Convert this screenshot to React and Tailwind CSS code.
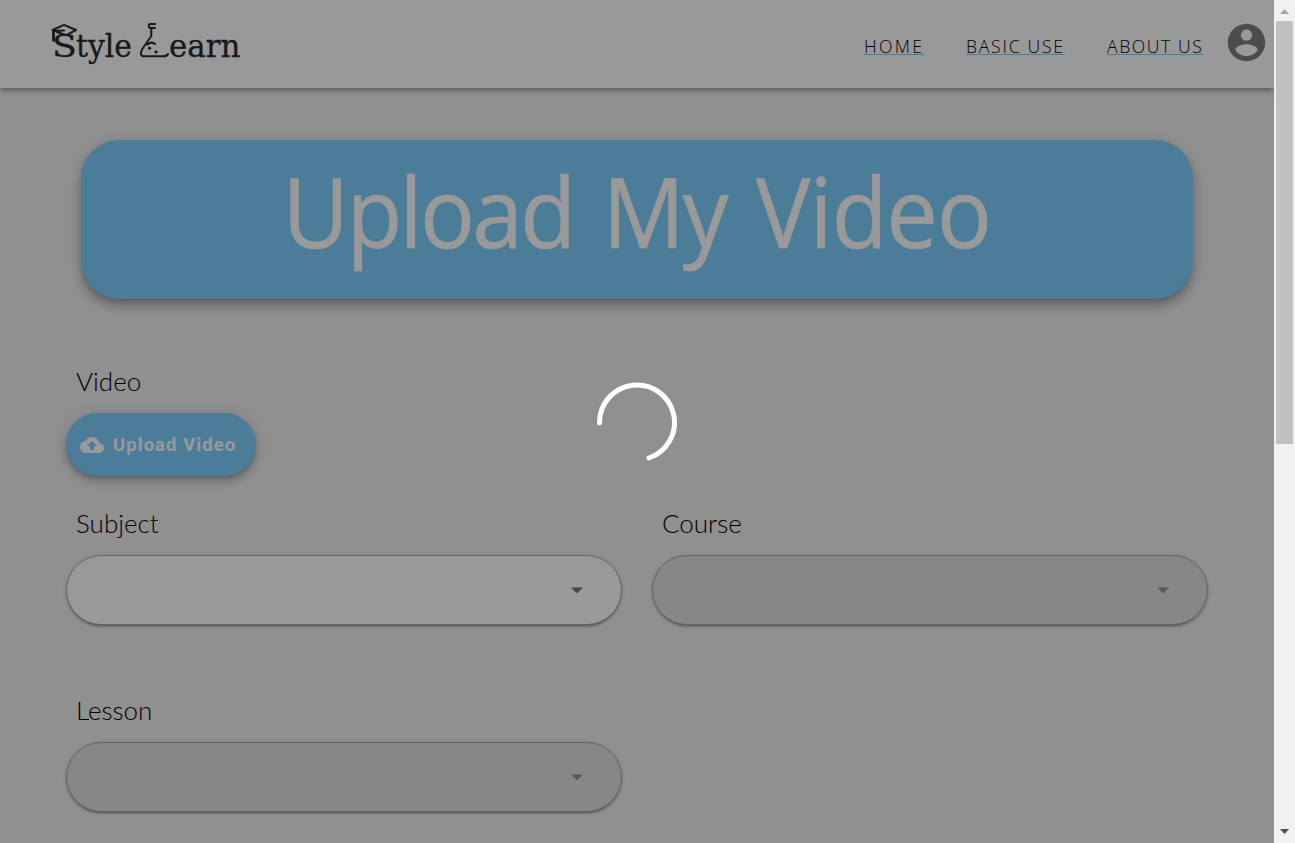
import React from "react";

function Logo() {
  return (
    <svg width="200" height="56" viewBox="46 16 200 56" className="block" fill="none" stroke="#2a2a2a" strokeWidth="2" strokeLinecap="round" strokeLinejoin="round" role="img">
      <g fill="#2a2a2a" stroke="#2a2a2a" strokeWidth="0.3" fontFamily="DejaVu Serif, serif" fontSize="31">
        <text x="52" y="57" fontSize="31" textLength="25" lengthAdjust="spacingAndGlyphs">S</text>
        <text x="76" y="57" textLength="56" lengthAdjust="spacingAndGlyphs">tyle</text>
        <text x="169" y="57" textLength="71.500" lengthAdjust="spacingAndGlyphs">earn</text>
      </g>
      <path d="M52.500 30 L64 24.800 L76 30 L66 35.300 L57 32 M64 30.500 L53.500 31" />
      <path d="M53.500 31 V40.500" strokeWidth="2.800" />
      <path d="M155 24 H150.500 Q148.800 24 148.800 26 Q148.800 27.800 150.500 28 H155 M151.300 29 V36 L142.300 49 Q138.500 56.300 144.500 56.300 H163 Q167 56.300 168 54 M147.500 44.500 Q151.500 41 155 44" />
      <circle cx="149.500" cy="48.200" r="1.200" fill="#2a2a2a" strokeWidth="0.800" />
      <circle cx="156" cy="52" r="1.200" fill="#2a2a2a" strokeWidth="0.800" />
    </svg>
  );
}

const NAV = [
  { label: "HOME", cls: "w-[60px] tracking-[2.3px]" },
  { label: "BASIC USE", cls: "w-[99px] tracking-[1.75px]" },
  { label: "ABOUT US", cls: "w-[98px] tracking-[1.6px]" },
];

function Header() {
  return (
    <header className="relative flex h-[88px] shrink-0 items-start bg-white pl-[46px] pr-[5px] shadow-[0_2px_4px_-1px_rgba(0,0,0,0.2),0_4px_5px_0_rgba(0,0,0,0.14),0_1px_10px_0_rgba(0,0,0,0.12)]">
      <div className="pt-4"><Logo /></div>
      <nav className="ml-auto flex gap-[42px] pt-[34px] font-['Open_Sans',sans-serif] text-[17.6px] font-[350] leading-6 text-black">
        {NAV.map((n) => (
          <a key={n.label} href="#" className={`${n.cls} whitespace-nowrap underline decoration-[#7dd0ff] decoration-1 underline-offset-1`}>{n.label}</a>
        ))}
      </nav>
      <svg width="45" height="45" viewBox="0 0 24 24" className="ml-[19px] mt-5 block" fill="#7f7f7f">
        <path d="M12 2C6.480 2 2 6.480 2 12s4.480 10 10 10 10-4.480 10-10S17.520 2 12 2zm0 3c1.660 0 3 1.340 3 3s-1.340 3-3 3-3-1.340-3-3 1.340-3 3-3zm0 14.200c-2.500 0-4.710-1.280-6-3.220.030-1.990 4-3.080 6-3.080 1.990 0 5.970 1.090 6 3.080-1.290 1.940-3.500 3.220-6 3.220z" />
      </svg>
    </header>
  );
}

function Label({ children }) {
  return <div className="pl-2.5 font-['Lato',sans-serif] text-[26px] font-light leading-8 text-black">{children}</div>;
}

function SelectField({ label, disabled }) {
  return (
    <div className="flex w-[556px] flex-col gap-4">
      <Label>{label}</Label>
      <div className={`flex h-[70px] items-center justify-end rounded-[35px] border border-[#a8a8a8] pr-8 shadow-[0_3px_1px_-2px_rgba(0,0,0,0.2),0_2px_2px_0_rgba(0,0,0,0.14),0_1px_5px_0_rgba(0,0,0,0.12)] ${disabled ? "bg-[#e2e2e2]" : "bg-white"}`}>
        <svg width="24" height="24" viewBox="0 0 24 24" className="block" fill={disabled ? "#959595" : "#757575"}>
          <path d="M6 9.500h12l-6 6z" />
        </svg>
      </div>
    </div>
  );
}

function Scrollbar() {
  return (
    <div className="flex h-full w-[21px] shrink-0 flex-col items-center justify-between bg-[#f1f1f1]">
      <div className="flex flex-col items-center">
        <svg width="17" height="21" viewBox="0 0 17 21" className="block" fill="#a3a3a3"><path d="M4 14 L8.500 9 L13 14z" /></svg>
        <div className="h-[423px] w-[17px] bg-[#c1c1c1]" />
      </div>
      <svg width="17" height="21" viewBox="0 0 17 21" className="block" fill="#505050"><path d="M4 7 L8.500 12 L13 7z" /></svg>
    </div>
  );
}

export default function App() {
  return (
    <div className="flex h-[843px] w-[1295px] overflow-hidden">
      <div className="relative flex w-[1274px] flex-col overflow-hidden bg-[#f0f0f0]">
        <Header />
        <main className="flex flex-col px-[66px] pt-[52px]">
          <h1 className="mx-[15px] flex h-[159px] justify-center rounded-[38px] bg-[#7dd0ff] pt-[10px] font-['Open_Sans',sans-serif] text-[97px] font-[450] leading-[120px] tracking-[-2px] [word-spacing:8px] text-white shadow-[0_5px_5px_-3px_rgba(0,0,0,0.2),0_8px_10px_1px_rgba(0,0,0,0.14),0_3px_14px_2px_rgba(0,0,0,0.12)]">
            <span className="inline-block scale-x-[0.94] whitespace-nowrap [-webkit-text-stroke:0.7px_white]">
              <span className="tracking-[-2.8px]">Upload</span> My <span className="tracking-[-0.9px]">Video</span>
            </span>
          </h1>
          <div className="mt-[66px] flex flex-col items-start gap-4">
            <Label>Video</Label>
            <button className="flex h-[63px] w-[190px] items-center rounded-[32px] bg-[#7dd0ff] pl-[14px] text-white shadow-[0_3px_5px_-1px_rgba(0,0,0,0.2),0_6px_10px_0_rgba(0,0,0,0.14),0_1px_18px_0_rgba(0,0,0,0.12)]">
              <svg width="24" height="24" viewBox="0 0 24 24" className="block" fill="currentColor">
                <path d="M19.350 10.040C18.670 6.590 15.640 4 12 4 9.110 4 6.600 5.640 5.350 8.040 2.340 8.360 0 10.910 0 14c0 3.310 2.690 6 6 6h13c2.760 0 5-2.240 5-5 0-2.640-2.050-4.780-4.650-4.960zM14 13v4h-4v-4H7l5-5 5 5h-3z" />
              </svg>
              <span className="ml-[9px] whitespace-nowrap font-['Roboto',sans-serif] text-[18.4px] font-bold leading-6 tracking-[1.1px]">Upload Video</span>
            </button>
          </div>
          <div className="mt-[31px] flex gap-[30px]">
            <SelectField label="Subject" />
            <SelectField label="Course" disabled />
          </div>
          <div className="mt-[69px]">
            <SelectField label="Lesson" disabled />
          </div>
        </main>
        <div className="absolute inset-0 flex items-center justify-center bg-black/40">
          <svg width="84" height="84" viewBox="0 0 84 84" className="block" fill="none" stroke="#fff" strokeWidth="5" strokeLinecap="round">
            <path d="M4.500 43 A37.500 37.500 0 1 1 54 78" />
          </svg>
        </div>
      </div>
      <Scrollbar />
    </div>
  );
}
